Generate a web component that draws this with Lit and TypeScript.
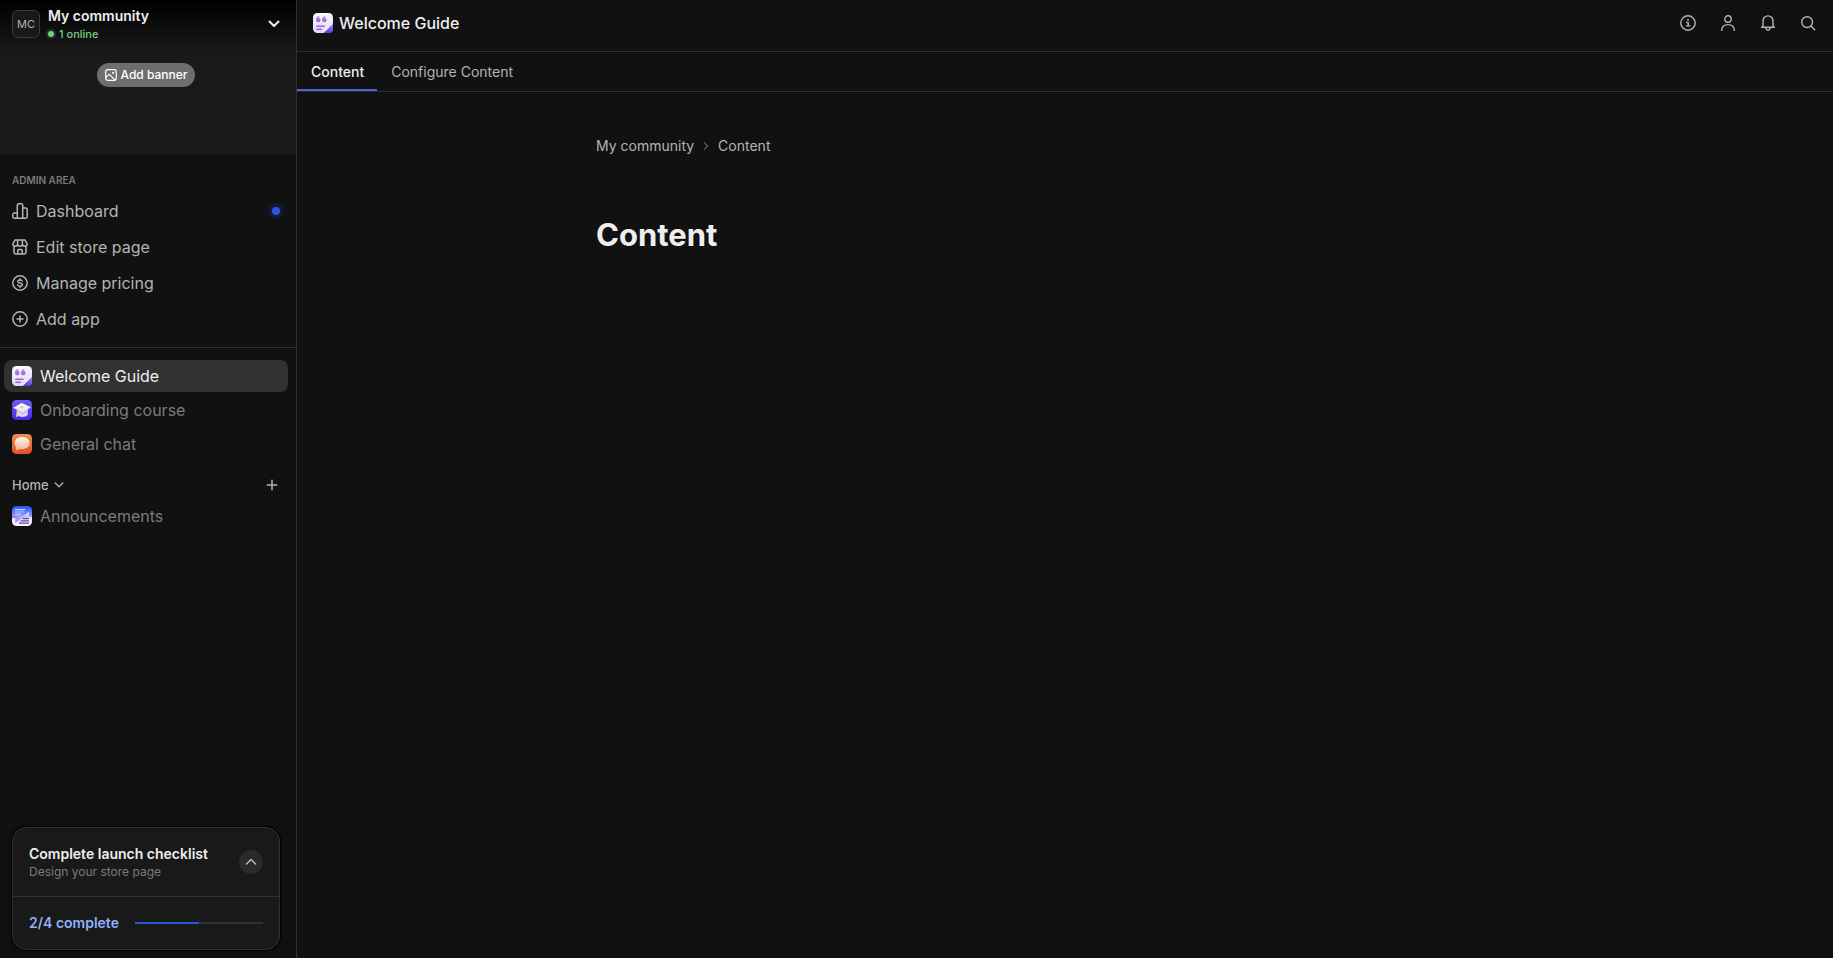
import { LitElement, html, css, svg, TemplateResult } from "lit";
import { customElement, property } from "lit/decorators.js";
import { classMap } from "lit/directives/class-map.js";

const shared = css`
  *, *::before, *::after { box-sizing: border-box; }
  a { color: inherit; text-decoration: none; }
  button {
    font: inherit; color: inherit; background: none; border: 0; padding: 0; margin: 0;
    display: inline-flex; align-items: center; justify-content: center; cursor: pointer;
  }
  svg { display: block; flex: none; }
  h1, h2, p { margin: 0; }
`;

const line = (size: number, box: number, width: number, body: TemplateResult) => html`
  <svg width=${size} height=${size} viewBox="0 0 ${box} ${box}" fill="none" stroke="currentColor"
    stroke-width=${width} stroke-linecap="round" stroke-linejoin="round" aria-hidden="true">${body}</svg>`;

const icons = {
  chart: line(16, 16, 1.5, svg`<path d="M5.3 15.2H2.2A1.4 1.4 0 0 1 .8 13.8v-2.3a1.4 1.4 0 0 1 1.4-1.4h3.1M5.3 15.2V2.3A1.5 1.5 0 0 1 6.8.8h2.4a1.5 1.5 0 0 1 1.5 1.5v12.9M5.3 15.2h8.5a1.4 1.4 0 0 0 1.4-1.4V6.5a1.4 1.4 0 0 0-1.4-1.4h-3.1"/>`),
  store: line(16, 16, 1.5, svg`<path d="M3.2.9h9.6l2.3 3.9c.2 1.5-.9 2.4-2.3 2.4S10.4 6.4 10.4 5c0 1.4-1.1 2.2-2.4 2.2S5.6 6.4 5.6 5c0 1.4-1 2.2-2.4 2.2S.7 6.3.9 4.8L3.2.9ZM5.6 5V1M10.4 5V1M2 7.3v5.6a2 2 0 0 0 2 2h8a2 2 0 0 0 2-2V7.3M5.8 14.7v-3.4c0-.5.4-.9.9-.9h2.6c.5 0 .9.4.9.9v3.4"/>`),
  dollar: line(16, 16, 1.5, svg`<circle cx="8" cy="8" r="7.2"/><path d="M10.2 6.1c-.2-.8-1-1.2-2.2-1.2-1.4 0-2.2.6-2.2 1.5 0 2.2 4.6 1 4.6 3.2 0 1-.9 1.6-2.3 1.6-1.3 0-2.2-.5-2.4-1.4M8 3.7v1.2M8 11.2v1.2"/>`),
  plusCircle: line(16, 16, 1.5, svg`<circle cx="8" cy="8" r="7.2"/><path d="M8 5v6M5 8h6"/>`),
  image: line(12, 12, 1.2, svg`<rect x=".7" y=".7" width="10.6" height="10.6" rx="2.2"/><path d="m1 8.3 2.5-2.5c.4-.4.9-.4 1.3 0l5.2 5.2"/><circle cx="8.2" cy="3.9" r=".5"/>`),
  caretDown: line(12, 12, 2, svg`<path d="m1.5 3.5 4.5 4.5 4.5-4.5"/>`),
  caretSmall: line(10, 10, 1.3, svg`<path d="m1.2 3 3.8 3.8L8.8 3"/>`),
  caretUp: line(12, 12, 1.6, svg`<path d="m1.5 8 4.500-4.500L10.500 8"/>`),
  caretRight: line(8, 8, 1.1, svg`<path d="m2.200.6 3.400 3.400-3.400 3.400"/>`),
  plus: line(12, 12, 1.5, svg`<path d="M6 1.3v9.4M1.3 6h9.4"/>`),
  info: line(16, 16, 1.4, svg`<circle cx="8" cy="8" r="7.2"/><path d="M6.7 7.5h1.500v3.400M6.400 10.900h3.400"/><circle cx="7.9" cy="5" r=".5" fill="currentColor" stroke-width=".8"/>`),
  person: line(16, 16, 1.4, svg`<circle cx="8" cy="4" r="3.200"/><path d="M1.700 15.200c.2-3.600 2.900-5.600 6.300-5.600s6.100 2 6.300 5.600"/>`),
  bell: line(16, 16, 1.4, svg`<path d="M3 12.200V5.900A5 5 0 0 1 8 .9a5 5 0 0 1 5 5v6.300M1.500 12.300h13M5.900 12.700c.1 1.600 1 2.400 2.100 2.400s2-.8 2.100-2.400"/>`),
  search: line(16, 16, 1.4, svg`<circle cx="7.100" cy="7.100" r="5.400"/><path d="m11 11 3.700 3.700"/>`),
};

const guideArt = html`
  <svg width="20" height="20" viewBox="0 0 20 20" aria-hidden="true">
    <defs>
      <linearGradient id="paper" x1="0" y1="0" x2="0" y2="1"><stop stop-color="#faf8ff"/><stop offset="1" stop-color="#dcdaf8"/></linearGradient>
      <linearGradient id="ink" x1="0" y1="0" x2="0" y2="1"><stop stop-color="#c58be8"/><stop offset="1" stop-color="#9564dc"/></linearGradient>
      <linearGradient id="fold" x1="0" y1="0" x2="0" y2="1"><stop stop-color="#a58cf0"/><stop offset="1" stop-color="#6433d8"/></linearGradient>
    </defs>
    <rect width="20" height="20" rx="4.5" fill="url(#paper)"/>
    <path d="M20 10.5V16a4 4 0 0 1-4 4h-5.5Z" fill="url(#fold)"/>
    <path d="M20 10.5 10.5 20l2.3-5.2c.4-.8.9-1.200 1.700-1.500Z" fill="#eceafd"/>
    <path d="M6.600 2.800C4.200 3.300 3 4.700 3 6.700a2.300 2.300 0 1 0 2.600-2.100c.1-.7.5-1.200 1.200-1.600ZM12.600 2.800C10.200 3.300 9 4.700 9 6.700a2.300 2.300 0 1 0 2.600-2.100c.1-.7.5-1.200 1.200-1.600Z" fill="url(#ink)"/>
    <rect x="3.200" y="12.600" width="8.600" height="1.500" rx=".7" fill="#9b62dc"/>
    <rect x="3.200" y="15.600" width="5.800" height="1.500" rx=".7" fill="#9b62dc"/>
  </svg>`;

const courseArt = html`
  <svg width="20" height="20" viewBox="0 0 20 20" aria-hidden="true">
    <defs>
      <linearGradient id="violet" x1="0" y1="0" x2="0" y2="1"><stop stop-color="#6f5cf6"/><stop offset="1" stop-color="#4528ee"/></linearGradient>
      <linearGradient id="cap" x1="0" y1="0" x2="0" y2="1"><stop stop-color="#fff"/><stop offset="1" stop-color="#e4def4"/></linearGradient>
    </defs>
    <rect width="20" height="20" rx="4.5" fill="url(#violet)"/>
    <path d="M5 9v5.800c1.300 2.700 8.700 3.100 10.800 0V9Z" fill="#ded7f0"/>
    <path d="M5 9.600 10.700 13l5.100-3.300v1.500L10.900 14.300 5 11.200Z" fill="#bdb2e2"/>
    <path d="M9.700 3 19 7.200l-8.300 5.200L1 7.800Z" fill="url(#cap)"/>
    <path d="M10 7 5 9.200v5" stroke="#ecd58c" stroke-width=".7" fill="none"/>
    <ellipse cx="10" cy="6.900" rx="1.500" ry=".9" fill="#e8c568"/>
    <path d="m4.200 13.400-.4 3.400 1.800.4.200-3.600Z" fill="#f0b8a0"/>
  </svg>`;

const chatArt = html`
  <svg width="20" height="20" viewBox="0 0 20 20" aria-hidden="true">
    <defs>
      <linearGradient id="orange" x1="0" y1="0" x2="0" y2="1"><stop stop-color="#ef914c"/><stop offset="1" stop-color="#e0502a"/></linearGradient>
      <linearGradient id="bubble" x1="0" y1="0" x2="0" y2="1"><stop stop-color="#fff4e8"/><stop offset="1" stop-color="#f4b79f"/></linearGradient>
    </defs>
    <rect width="20" height="20" rx="4.5" fill="url(#orange)"/>
    <path d="M10.200 3c4.300 0 7.400 2.600 7.400 6s-3.100 6.100-7.400 6.100c-.9 0-1.700-.1-2.500-.3-1 1-2.500 1.600-4.300 1.700.8-.8 1.200-1.700 1.200-2.800C3.300 12.500 2.700 10.900 2.700 9c0-3.400 3.200-6 7.500-6Z" fill="url(#bubble)"/>
  </svg>`;

const newsArt = html`
  <svg width="20" height="20" viewBox="0 0 20 20" aria-hidden="true">
    <defs>
      <linearGradient id="sky" x1="0" y1="0" x2="0" y2="1"><stop stop-color="#2357f2"/><stop offset=".5" stop-color="#8d98fa"/><stop offset=".6" stop-color="#e9e8ff"/><stop offset="1" stop-color="#f4f2ff"/></linearGradient>
      <linearGradient id="bolt" x1="0" y1="0" x2="1" y2="0"><stop stop-color="#9a78ec"/><stop offset="1" stop-color="#e6dcff"/></linearGradient>
    </defs>
    <rect width="20" height="20" rx="4.5" fill="url(#sky)"/>
    <path d="M0 10h10.500L17 5.800V11h3v1.200H10L3.300 17v-5H0Z" fill="url(#bolt)"/>
    <path d="M3 3.600h10M3 6h8.500M3 8.400h6" stroke="#b9d2ff" stroke-width="1.200"/>
    <path d="M10.500 12.600h6.500M8.500 14.900h8.500M7 17.200h10" stroke="#5b4aa8" stroke-width="1.200"/>
  </svg>`;

@customElement("side-link")
class SideLink extends LitElement {
  @property() kind: "admin" | "app" = "app";
  @property() label = "";
  @property({ type: Boolean }) active = false;
  @property({ type: Boolean }) notify = false;
  @property({ attribute: false }) icon?: TemplateResult;

  static styles = [shared, css`
    :host { display: block; }
    .row { display: flex; align-items: center; border-radius: 8px; height: 32px; padding: 0 8px; gap: 8px; font-size: 16px; line-height: 24px; color: #7b7b7b; }
    .admin { color: #b4b4b4; }
    .active { background: #313131; color: #eeeeee; }
    .label { flex: 1; }
    .dot { width: 8px; height: 8px; border-radius: 50%; background: #2b56d8; box-shadow: 0 0 0 4px #121a33; }
  `];

  render() {
    return html`<a class=${classMap({ row: true, admin: this.kind === "admin", active: this.active })} href="#"
      aria-current=${this.active ? "page" : "false"}>
      ${this.icon}<span class="label">${this.label}</span>${this.notify ? html`<span class="dot"></span>` : ""}
    </a>`;
  }
}

@customElement("launch-checklist")
class LaunchChecklist extends LitElement {
  @property({ type: Number }) done = 2;
  @property({ type: Number }) total = 4;

  static styles = [shared, css`
    :host { display: block; background: #191919; border: 1px solid #313131; border-radius: 14px; box-shadow: 0 0 0 1px #000, 0 2px 8px #0006; }
    .top { display: flex; align-items: center; justify-content: space-between; padding: 16px; height: 68px; }
    .title { font-size: 14px; line-height: 20px; font-weight: 600; color: #eeeeee; }
    .sub { font-size: 12px; line-height: 16px; color: #7b7b7b; }
    .toggle { width: 24px; height: 24px; border-radius: 50%; background: #2a2a2a; color: #b4b4b4; }
    .bottom { display: flex; align-items: center; gap: 16px; padding: 16px; border-top: 1px solid #313131; height: 53px; }
    .count { font-size: 14px; line-height: 20px; font-weight: 600; color: #8fb0fb; white-space: nowrap; }
    .track { flex: 1; height: 2px; background: #313131; }
    .fill { height: 100%; background: #2b56d8; }
  `];

  render() {
    return html`
      <div class="top">
        <div><h2 class="title">Complete launch checklist</h2><p class="sub">Design your store page</p></div>
        <button class="toggle" aria-label="Expand checklist">${icons.caretUp}</button>
      </div>
      <div class="bottom">
        <span class="count">${this.done}/${this.total} complete</span>
        <div class="track" role="progressbar" aria-label="Checklist progress" aria-valuenow=${this.done} aria-valuemax=${this.total}>
          <div class="fill" style="width:${(this.done / this.total) * 100}%"></div>
        </div>
      </div>`;
  }
}

@customElement("app-root")
class AppRoot extends LitElement {
  static styles = [shared, css`
    :host {
      display: grid; grid-template-columns: 297px minmax(0, 1fr); min-height: 100vh;
      background: #111111; color: #eeeeee; font-family: Inter, "Liberation Sans", sans-serif; font-size: 14px; line-height: 20px;
    }
    .sidebar { display: flex; flex-direction: column; border-right: 1px solid #313131; min-height: 100vh; }
    .banner { height: 155px; background: linear-gradient(#000, #00000000 52px), #191919; display: flex; flex-direction: column; align-items: center; gap: 17px; }
    .community { display: flex; align-items: center; width: 100%; gap: 8px; padding: 6px 16px 4px 12px; text-align: left; justify-content: flex-start; }
    .avatar { width: 28px; height: 28px; border: 1px solid #3a3a3a; border-radius: 6px; background: #191919; color: #b4b4b4; font-size: 11px; line-height: 26px; text-align: center; }
    .who { flex: 1; display: flex; flex-direction: column; }
    .name { font-weight: 600; line-height: 20px; }
    .online { display: flex; align-items: center; gap: 5px; font-size: 11px; line-height: 16px; font-weight: 500; color: #71d083; }
    .online::before { content: ""; width: 6px; height: 6px; border-radius: 50%; background: #71d083; box-shadow: 0 0 0 2px #1c3524; }
    .add-banner { height: 24px; margin-right: 4px; padding: 0 8px; gap: 4px; border-radius: 12px; background: #6e6e6e; color: #ffffff; font-size: 12px; font-weight: 500; }
    .admin-nav { padding: 17px 8px 12px 4px; border-bottom: 1px solid #313131; }
    .caption { padding: 0 8px; margin-bottom: 7px; font-size: 10px; line-height: 16px; font-weight: 600; color: #7b7b7b; }
    .admin-list { display: grid; gap: 4px; }
    .apps { display: grid; gap: 2px; padding: 12px 8px 0 4px; }
    .group { display: flex; align-items: center; justify-content: space-between; padding: 15px 18px 5px 12px; color: #b4b4b4; font-size: 13px; line-height: 20px; font-weight: 500; }
    .group-name { gap: 5px; }
    .group + .apps { padding-top: 0; }
    .checklist { margin: auto 16px 8px 12px; }
    .header { display: flex; align-items: center; justify-content: space-between; height: 52px; padding: 0 12px 6px 16px; border-bottom: 1px solid #313131; }
    .heading { display: flex; align-items: center; gap: 6px; font-size: 16px; line-height: 24px; font-weight: 500; }
    .tools { display: flex; gap: 14px; color: #b4b4b4; }
    .tool { width: 26px; height: 26px; }
    .tabs { display: flex; height: 40px; border-bottom: 1px solid #313131; color: #b4b4b4; }
    .tab { padding: 10px 13px 0 14px; height: 39px; }
    .current { color: #eeeeee; font-weight: 500; border-bottom: 2px solid #4a66cc; }
    .page { width: min(938px, 100% - 48px); margin: 0 auto; padding-top: 44px; }
    .crumbs { display: flex; align-items: center; gap: 8px; color: #b4b4b4; }
    .sep { color: #606060; }
    .title { margin-top: 59px; font-size: 31px; line-height: 40px; font-weight: 700; }
  `];

  render() {
    const admin = [
      { label: "Dashboard", icon: icons.chart, notify: true },
      { label: "Edit store page", icon: icons.store, notify: false },
      { label: "Manage pricing", icon: icons.dollar, notify: false },
      { label: "Add app", icon: icons.plusCircle, notify: false },
    ];
    const apps = [
      { label: "Welcome Guide", icon: guideArt, active: true },
      { label: "Onboarding course", icon: courseArt, active: false },
      { label: "General chat", icon: chatArt, active: false },
    ];
    return html`
      <aside class="sidebar">
        <div class="banner">
          <button class="community">
            <span class="avatar">MC</span>
            <span class="who"><span class="name">My community</span><span class="online">1 online</span></span>
            ${icons.caretDown}
          </button>
          <button class="add-banner">${icons.image}Add banner</button>
        </div>
        <nav class="admin-nav" aria-label="Admin area">
          <p class="caption">ADMIN AREA</p>
          <div class="admin-list">
            ${admin.map((i) => html`<side-link kind="admin" .label=${i.label} .icon=${i.icon} .notify=${i.notify}></side-link>`)}
          </div>
        </nav>
        <nav class="apps" aria-label="Apps">
          ${apps.map((i) => html`<side-link .label=${i.label} .icon=${i.icon} .active=${i.active}></side-link>`)}
        </nav>
        <div class="group">
          <button class="group-name">Home ${icons.caretSmall}</button>
          <button aria-label="Add to Home">${icons.plus}</button>
        </div>
        <nav class="apps" aria-label="Home"><side-link label="Announcements" .icon=${newsArt}></side-link></nav>
        <launch-checklist class="checklist"></launch-checklist>
      </aside>
      <main>
        <header class="header">
          <div class="heading">${guideArt}Welcome Guide</div>
          <div class="tools">
            <button class="tool" aria-label="Info">${icons.info}</button>
            <button class="tool" aria-label="Members">${icons.person}</button>
            <button class="tool" aria-label="Notifications">${icons.bell}</button>
            <button class="tool" aria-label="Search">${icons.search}</button>
          </div>
        </header>
        <nav class="tabs" aria-label="Views">
          <a class="tab current" href="#" aria-current="page">Content</a>
          <a class="tab" href="#">Configure Content</a>
        </nav>
        <section class="page">
          <nav class="crumbs" aria-label="Breadcrumb">
            <a href="#">My community</a><span class="sep">${icons.caretRight}</span><a href="#">Content</a>
          </nav>
          <h1 class="title">Content</h1>
        </section>
      </main>`;
  }
}
